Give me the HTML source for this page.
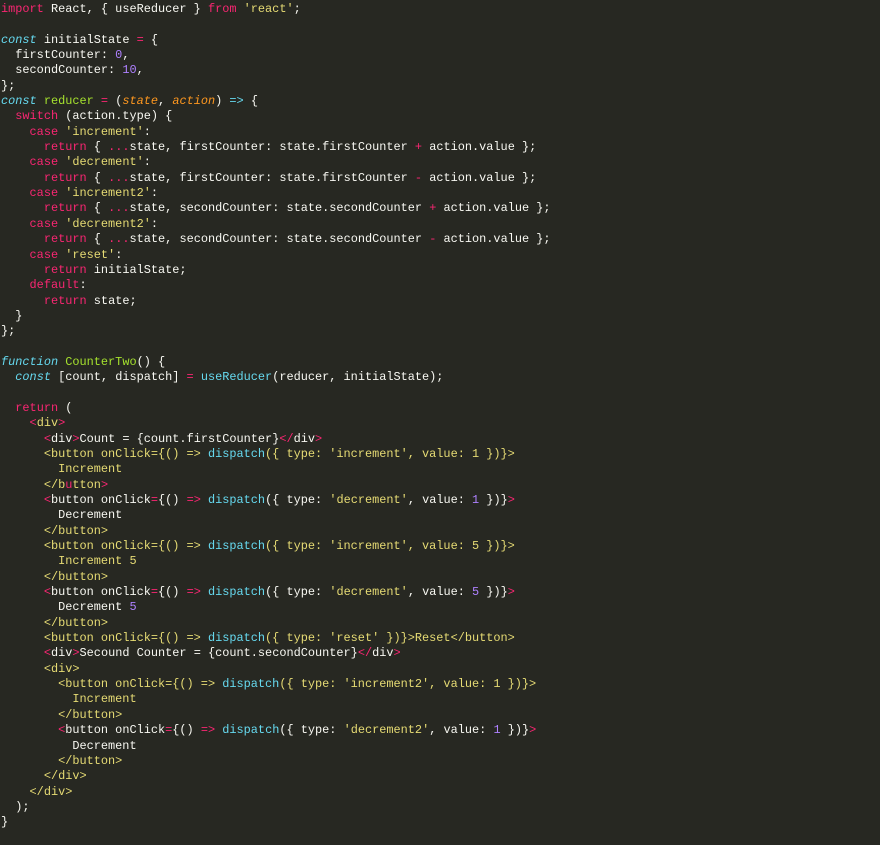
<!DOCTYPE html>
<html><head><meta charset="utf-8"><style>
html,body{margin:0;padding:0;background:#272822;width:880px;height:845px;overflow:hidden}
pre{margin:0;padding:2px 0 0 1px;font-family:"Liberation Mono",monospace;font-size:11.9px;line-height:15.34px;color:#f8f8f2;white-space:pre}
.k{color:#f92672}.c{color:#66d9ef;font-style:italic}.g{color:#a6e22e}.p{color:#fd971f;font-style:italic}.s{color:#e6db74}.n{color:#ae81ff}.f{color:#66d9ef}.y{color:#e6db74}
</style></head><body><pre><span class="k">import</span> React, { useReducer } <span class="k">from</span> <span class="s">'react'</span>;

<span class="c">const</span> initialState <span class="k">=</span> {
  firstCounter: <span class="n">0</span>,
  secondCounter: <span class="n">10</span>,
};
<span class="c">const</span> <span class="g">reducer</span> <span class="k">=</span> (<span class="p">state</span>, <span class="p">action</span>) <span class="c">=&gt;</span> {
  <span class="k">switch</span> (action.type) {
    <span class="k">case</span> <span class="s">'increment'</span>:
      <span class="k">return</span> { <span class="k">...</span>state, firstCounter: state.firstCounter <span class="k">+</span> action.value };
    <span class="k">case</span> <span class="s">'decrement'</span>:
      <span class="k">return</span> { <span class="k">...</span>state, firstCounter: state.firstCounter <span class="k">-</span> action.value };
    <span class="k">case</span> <span class="s">'increment2'</span>:
      <span class="k">return</span> { <span class="k">...</span>state, secondCounter: state.secondCounter <span class="k">+</span> action.value };
    <span class="k">case</span> <span class="s">'decrement2'</span>:
      <span class="k">return</span> { <span class="k">...</span>state, secondCounter: state.secondCounter <span class="k">-</span> action.value };
    <span class="k">case</span> <span class="s">'reset'</span>:
      <span class="k">return</span> initialState;
    <span class="k">default</span>:
      <span class="k">return</span> state;
  }
};

<span class="c">function</span> <span class="g">CounterTwo</span>() {
  <span class="c">const</span> [count, dispatch] <span class="k">=</span> <span class="f">useReducer</span>(reducer, initialState);

  <span class="k">return</span> (
    <span class="k">&lt;</span><span class="y">div</span><span class="k">&gt;</span>
      <span class="k">&lt;</span>div<span class="k">&gt;</span>Count = {count.firstCounter}<span class="k">&lt;/</span>div<span class="k">&gt;</span>
      <span class="y">&lt;button onClick={() =&gt; </span><span class="f">dispatch</span><span class="y">({ type: 'increment', value: 1 })}&gt;</span>
        <span class="y">Increment</span>
      <span class="y">&lt;/b</span><span class="k">u</span><span class="y">tton</span><span class="k">&gt;</span>
      <span class="k">&lt;</span>button onClick<span class="k">=</span>{() <span class="k">=&gt;</span> <span class="f">dispatch</span>({ type: <span class="s">'decrement'</span>, value: <span class="n">1</span> })}<span class="k">&gt;</span>
        Decrement
      <span class="y">&lt;/button&gt;</span>
      <span class="y">&lt;button onClick={() =&gt; </span><span class="f">dispatch</span><span class="y">({ type: 'increment', value: 5 })}&gt;</span>
        <span class="y">Increment 5</span>
      <span class="y">&lt;/button&gt;</span>
      <span class="k">&lt;</span>button onClick<span class="k">=</span>{() <span class="k">=&gt;</span> <span class="f">dispatch</span>({ type: <span class="s">'decrement'</span>, value: <span class="n">5</span> })}<span class="k">&gt;</span>
        Decrement <span class="n">5</span>
      <span class="y">&lt;/button&gt;</span>
      <span class="y">&lt;button onClick={() =&gt; </span><span class="f">dispatch</span><span class="y">({ type: 'reset' })}&gt;Reset&lt;/button&gt;</span>
      <span class="k">&lt;</span>div<span class="k">&gt;</span>Secound Counter = {count.secondCounter}<span class="k">&lt;/</span>div<span class="k">&gt;</span>
      <span class="y">&lt;div&gt;</span>
        <span class="y">&lt;button onClick={() =&gt; </span><span class="f">dispatch</span><span class="y">({ type: 'increment2', value: 1 })}&gt;</span>
          <span class="y">Increment</span>
        <span class="y">&lt;/button&gt;</span>
        <span class="k">&lt;</span>button onClick<span class="k">=</span>{() <span class="k">=&gt;</span> <span class="f">dispatch</span>({ type: <span class="s">'decrement2'</span>, value: <span class="n">1</span> })}<span class="k">&gt;</span>
          Decrement
        <span class="y">&lt;/button&gt;</span>
      <span class="y">&lt;/div&gt;</span>
    <span class="y">&lt;/div&gt;</span>
  );
}
</pre></body></html>
